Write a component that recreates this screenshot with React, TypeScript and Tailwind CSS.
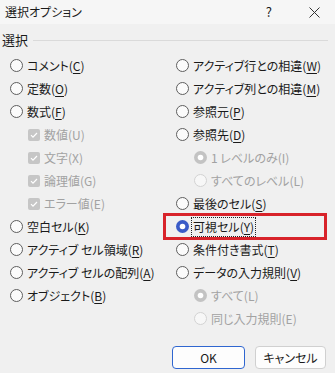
import React from "react";

type Item = {
  label: string;
  mn?: string;
  kind: "radio" | "check";
  sub?: boolean;
  checked?: boolean;
  disabled?: boolean;
  focus?: boolean;
  mark?: boolean;
};

const left: Item[] = [
  { label: "コメント", mn: "C", kind: "radio" },
  { label: "定数", mn: "O", kind: "radio" },
  { label: "数式", mn: "F", kind: "radio" },
  { label: "数値", mn: "U", kind: "check", sub: true, checked: true, disabled: true },
  { label: "文字", mn: "X", kind: "check", sub: true, checked: true, disabled: true },
  { label: "論理値", mn: "G", kind: "check", sub: true, checked: true, disabled: true },
  { label: "エラー値", mn: "E", kind: "check", sub: true, checked: true, disabled: true },
  { label: "空白セル", mn: "K", kind: "radio" },
  { label: "アクティブ セル領域", mn: "R", kind: "radio" },
  { label: "アクティブ セルの配列", mn: "A", kind: "radio" },
  { label: "オブジェクト", mn: "B", kind: "radio" },
];

const right: Item[] = [
  { label: "アクティブ行との相違", mn: "W", kind: "radio" },
  { label: "アクティブ列との相違", mn: "M", kind: "radio" },
  { label: "参照元", mn: "P", kind: "radio" },
  { label: "参照先", mn: "D", kind: "radio" },
  { label: "1 レベルのみ", mn: "I", kind: "radio", sub: true, checked: true, disabled: true },
  { label: "すべてのレベル", mn: "L", kind: "radio", sub: true, disabled: true },
  { label: "最後のセル", mn: "S", kind: "radio" },
  { label: "可視セル", mn: "Y", kind: "radio", checked: true, focus: true, mark: true },
  { label: "条件付き書式", mn: "T", kind: "radio" },
  { label: "データの入力規則", mn: "V", kind: "radio" },
  { label: "すべて", mn: "L", kind: "radio", sub: true, checked: true, disabled: true },
  { label: "同じ入力規則", mn: "E", kind: "radio", sub: true, disabled: true },
];

function Radio({ checked, disabled }: { checked?: boolean; disabled?: boolean }) {
  if (checked) {
    return (
      <svg width="13" height="13" viewBox="0 0 13 13" className="shrink-0">
        <circle cx="6.5" cy="6.5" r="6.5" fill={disabled ? "#c3c3c3" : "#3a5bc7"} />
        <circle cx="6.5" cy="6.5" r="2.8" fill="#ffffff" />
      </svg>
    );
  }
  return (
    <svg width="13" height="13" viewBox="0 0 13 13" className="shrink-0">
      <circle
        cx="6.5"
        cy="6.5"
        r="6"
        fill={disabled ? "#f7f7f7" : "#fbfbfb"}
        stroke={disabled ? "#d2d2d2" : "#5e5e5e"}
        strokeWidth="1"
      />
    </svg>
  );
}

function Check() {
  return (
    <svg width="12" height="12" viewBox="0 0 12 12" className="shrink-0">
      <rect x="0" y="0" width="12" height="12" rx="2" fill="#c6c6c6" />
      <path d="M3 6.2 L5 8.2 L9 4" fill="none" stroke="#ffffff" strokeWidth="1.2" />
    </svg>
  );
}

function Row({ it }: { it: Item }) {
  const text = (
    <span className={it.disabled ? "text-[#a2a2a2]" : "text-[#1a1a1a]"}>
      {it.label}(
      {it.disabled ? it.mn : <span className="underline underline-offset-2">{it.mn}</span>})
    </span>
  );
  return (
    <div className={`relative h-[23px] flex items-center gap-[4px] ${it.sub ? "pl-[18px]" : ""}`}>
      {it.kind === "radio" ? <Radio checked={it.checked} disabled={it.disabled} /> : <Check />}
      {it.focus ? (
        <span className="border border-dotted border-[#222] px-[1px] leading-[18px] -ml-[2px]">{text}</span>
      ) : (
        text
      )}
      {it.mark && (
        <div className="absolute left-[-13px] top-[-2px] w-[164px] h-[27px] border-[3px] border-[#d8232a]" />
      )}
    </div>
  );
}

export default function App() {
  return (
    <div className="w-[335px] h-[373px] bg-[#f0f0f0] overflow-hidden text-[12px] text-[#1a1a1a] font-['Noto_Sans_CJK_JP',sans-serif] [font-feature-settings:'palt']">
      <div className="h-[24px] flex items-center pl-[5px] bg-[#f6f6f6]">
        <span>選択オプション</span>
        <span className="ml-auto mr-[37px] text-[13px]">?</span>
        <svg width="11" height="11" viewBox="0 0 11 11" className="mr-[15px]">
          <path d="M0.5 0.5 L10.5 10.5 M10.5 0.5 L0.5 10.5" stroke="#333" strokeWidth="1" />
        </svg>
      </div>
      <div className="h-[30px] flex items-center pl-[2px] pr-[7px] pt-[2px]">
        <span className="text-[13px]">選択</span>
        <div className="flex-1 h-px bg-[#dadada] ml-[5px]" />
      </div>
      <div className="grid grid-cols-[166px_1fr] pl-[10px]">
        <div>
          {left.map((it, i) => (
            <Row key={i} it={it} />
          ))}
        </div>
        <div>
          {right.map((it, i) => (
            <Row key={i} it={it} />
          ))}
        </div>
      </div>
      <div className="flex justify-end gap-[10px] pr-[9px] mt-[16px]">
        <button className="w-[73px] h-[23px] rounded-[4px] bg-[#fdfdfd] border border-[#2f66d0] text-[12px]">OK</button>
        <button className="w-[71px] h-[23px] rounded-[4px] bg-[#fdfdfd] border border-[#d0d0d0] text-[12px]">キャンセル</button>
      </div>
    </div>
  );
}
